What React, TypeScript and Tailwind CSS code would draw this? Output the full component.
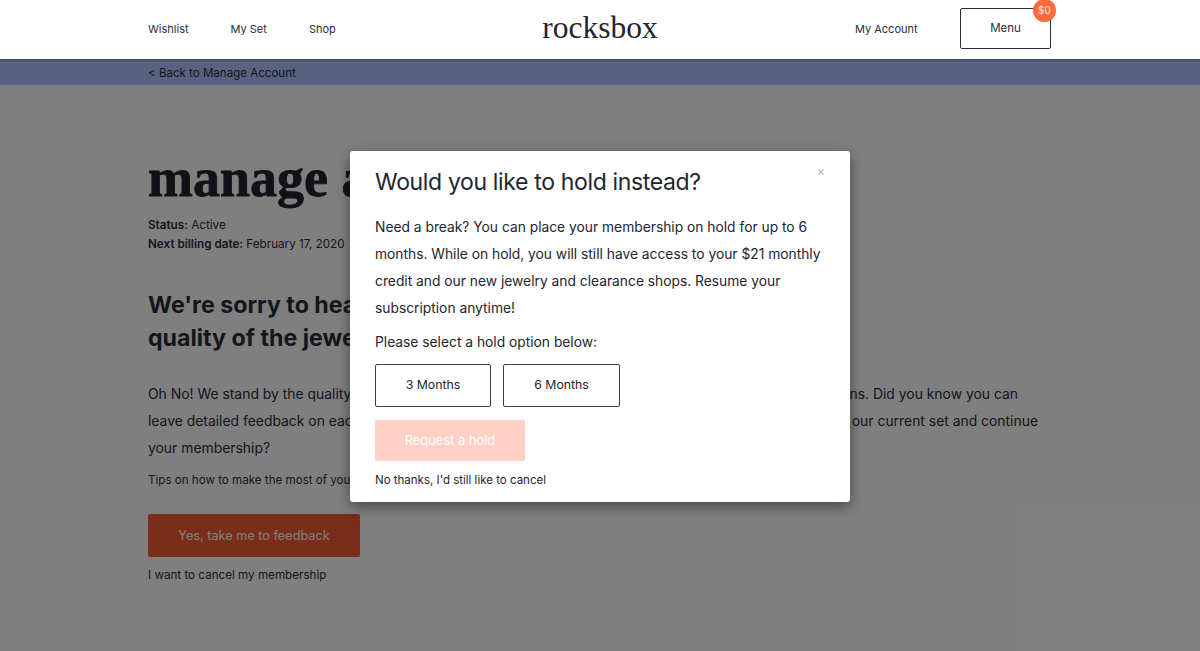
const sans = "font-['Inter','Liberation_Sans',sans-serif]";

function NavLink({ label }: { label: string }) {
  return <a className="block pt-[1px] text-[11px] leading-none text-[#2b2d3a]">{label}</a>;
}

function Header() {
  return (
    <header className="relative z-20 h-[61px] bg-white border-b-2 border-[#4a5068]">
      <div className="mx-auto w-[904px] h-full pb-[1px] flex items-center justify-between">
        <nav className="w-[320px] flex gap-[42px]">
          <NavLink label="Wishlist" />
          <NavLink label="My Set" />
          <NavLink label="Shop" />
        </nav>
        <a className="mb-[2px] font-['Liberation_Serif',serif] text-[31.5px] leading-none text-[#23252f]">rocksbox</a>
        <div className="w-[197px] ml-[123px] pr-[1px] flex items-center justify-between">
          <NavLink label="My Account" />
          <button className="relative mb-[1px] pt-[1px] w-[91px] h-[41px] border border-[#2b2d3a] rounded-[2px] text-[11.5px] text-[#2b2d3a]">
            Menu
            <span className="absolute -top-[10px] -right-[6px] w-[23px] h-[23px] rounded-full bg-[#ff6a3d] text-white/80 text-[10px] flex items-center justify-center">$0</span>
          </button>
        </div>
      </div>
    </header>
  );
}

function Modal() {
  return (
    <div className="absolute z-30 left-[350px] top-[151px] w-[500px] h-[351px] bg-white rounded-[3px] shadow-[0_4px_14px_rgba(0,0,0,0.45)] px-[25px] pt-[13px] text-[#23252f]">
      <span className="absolute right-[25px] top-[12px] text-[13px] leading-4 text-[#b5b5b5]">×</span>
      <h2 className="text-[23px] leading-[36px] tracking-[-0.35px]">Would you like to hold instead?</h2>
      <p className="mt-[14px] text-[13.8px] leading-[27px]">
        Need a break? You can place your membership on hold for up to 6 months. While on hold, you will still have access to your $21 monthly credit and our new jewelry and clearance shops. Resume your subscription anytime!
      </p>
      <p className="mt-[7px] text-[13.8px] leading-[27px]">Please select a hold option below:</p>
      <div className="mt-[8px] flex gap-[12px]">
        <button className="w-[116px] h-[43px] border border-[#3a3c48] rounded-[2px] text-[12.3px]">3 Months</button>
        <button className="w-[117px] h-[43px] border border-[#3a3c48] rounded-[2px] text-[12.3px]">6 Months</button>
      </div>
      <button className="mt-[13px] block w-[150px] h-[41px] bg-[#ffd0c5] rounded-[2px] text-[12.9px] text-white">Request a hold</button>
      <a className="mt-[11px] block text-[11.5px] leading-[16px]">No thanks, I'd still like to cancel</a>
    </div>
  );
}

export default function App() {
  return (
    <div className={`relative h-[651px] w-[1200px] overflow-hidden bg-white ${sans}`}>
      <Header />
      <div className="h-[24px] bg-[#b1c3ff]">
        <div className="mx-auto w-[904px] text-[11.55px] leading-[25px] text-[#2b2d3a]">&lt; Back to Manage Account</div>
      </div>
      <main className="mx-auto w-[904px] pt-[58px] text-[#2b2d3a]">
        <h1 className="font-['Liberation_Serif',serif] font-bold text-[54px] leading-[70px] [-webkit-text-stroke:0.8px_#23252f] text-[#23252f]">manage account</h1>
        <div className="mt-[3px] text-[11.7px] leading-[19px]">
          <div><b className="font-semibold">Status:</b> Active</div>
          <div><b className="font-semibold">Next billing date:</b> February 17, 2020</div>
        </div>
        <h2 className="mt-[35px] text-[23.2px] leading-[33px] font-bold">
          We're sorry to hear you weren't happy with the<br />quality of the jewelry.
        </h2>
        <div className="mt-[26px] text-[13.9px] leading-[27px]">
          <div className="flex justify-between whitespace-nowrap">
            <span>Oh No! We stand by the quality of our jewelry</span>
            <span className="pr-[34px]">ons. Did you know you can</span>
          </div>
          <div className="flex justify-between whitespace-nowrap">
            <span>leave detailed feedback on each piece you wear</span>
            <span className="pr-[14px]">our current set and continue</span>
          </div>
          <div>your membership?</div>
        </div>
        <p className="mt-[8px] text-[11.6px] leading-[20px]">Tips on how to make the most of your feedback</p>
        <button className="mt-[24px] block w-[212px] h-[43px] bg-[#f45a30] rounded-[2px] text-[12.7px] text-white">Yes, take me to feedback</button>
        <a className="mt-[9px] block text-[11.65px] leading-[18px]">I want to cancel my membership</a>
      </main>
      <div className="absolute inset-0 z-10 bg-black/50" />
      <Modal />
    </div>
  );
}
